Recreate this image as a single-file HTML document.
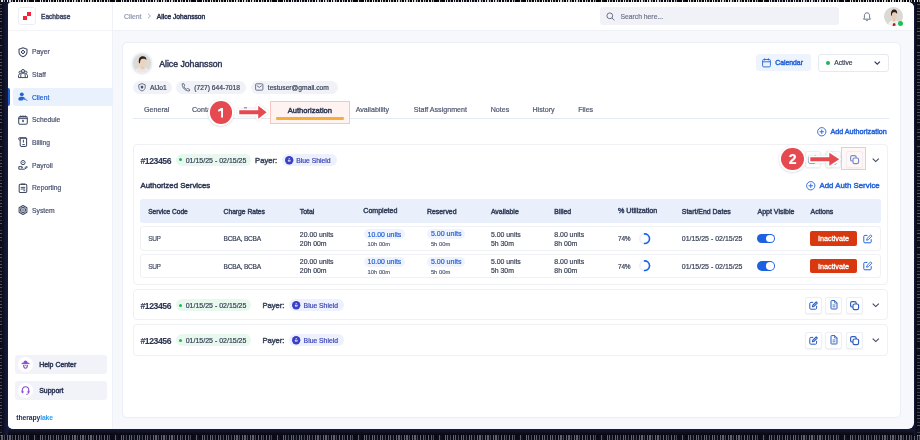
<!DOCTYPE html>
<html><head><meta charset="utf-8"><style>
html,body{margin:0;padding:0;}
body{width:920px;height:440px;overflow:hidden;position:relative;background:#0e1020;font-family:"Liberation Sans", sans-serif;}
.a{position:absolute;}
.t{white-space:nowrap;-webkit-font-smoothing:antialiased;}
svg{overflow:visible;}
</style></head><body>
<div class="a" style="left:0;top:0;width:920px;height:440px;will-change:transform">
<div class="a" style="left:0px;top:0px;width:920.00px;height:2.00px;background:repeating-linear-gradient(90deg,#0a0a10 0 1.3px,#d8d8dc 1.3px 2.6px,#15151c 2.6px 4.1px,#9a9aa2 4.1px 5px,#050508 5px 7.2px,#e8e8ea 7.2px 8.1px);"></div>
<div class="a" style="left:2px;top:2px;width:6.50px;height:434.00px;background:linear-gradient(90deg,#0b0d1c,#161b3e 80%,#243070);"></div>
<div class="a" style="left:0px;top:2px;width:2.00px;height:434.00px;background:repeating-linear-gradient(180deg,#0a0a10 0 2.3px,#c8c8cc 2.3px 3.2px,#15151c 3.2px 6.1px,#8a8a92 6.1px 7px,#050508 7px 9.2px,#d8d8da 9.2px 10.1px);opacity:0.35;"></div>
<div class="a" style="left:8px;top:429px;width:906.00px;height:6.00px;background:linear-gradient(180deg,#161a3c,#07080f);"></div>
<div class="a" style="left:0px;top:435px;width:920.00px;height:5.00px;background:repeating-linear-gradient(90deg,#0a0a10 0 1.3px,#d8d8dc 1.3px 2.6px,#15151c 2.6px 4.1px,#9a9aa2 4.1px 5px,#050508 5px 7.2px,#e8e8ea 7.2px 8.1px);opacity:0.4;"></div>
<div class="a" style="left:913.5px;top:2px;width:3.50px;height:434.00px;background:linear-gradient(90deg,#151a3c,#07080f);"></div>
<div class="a" style="left:917px;top:2px;width:3.00px;height:434.00px;background:repeating-linear-gradient(180deg,#0a0a10 0 2.3px,#c8c8cc 2.3px 3.2px,#15151c 3.2px 6.1px,#8a8a92 6.1px 7px,#050508 7px 9.2px,#d8d8da 9.2px 10.1px);opacity:0.35;"></div>
<div class="a" style="left:8px;top:2px;width:906.00px;height:427.00px;background:#f6f8fc;border-radius:4px 6px 6px 5px;"></div>
<div class="a" style="left:8px;top:2px;width:105.00px;height:427.00px;background:#fff;border-right:1px solid #eef1f7;border-radius:4px 0 0 5px;box-sizing:border-box;"></div>
<div class="a" style="left:8px;top:30px;width:104.00px;height:1.00px;background:#f2f4f8;"></div>
<div class="a" style="left:18px;top:7px;width:17.50px;height:17.50px;border:1px solid #eceef3;border-radius:3px;box-sizing:border-box;background:#fff;"></div>
<div class="a" style="left:22.8px;top:15.9px;width:4.20px;height:4.00px;background:#f2243b;"></div>
<div class="a" style="left:26.9px;top:11.9px;width:4.10px;height:4.10px;background:#f2243b;"></div>
<div class="a t" style="left:41px;top:13.14px;height:7.92px;line-height:7.92px;font-size:6.6px;color:#434c66;font-weight:400;-webkit-text-stroke:0.45px #434c66;">Eachbase</div>
<div class="a" style="left:13px;top:88px;width:99.50px;height:18.00px;background:#e9f1fd;border-radius:3px 0 0 3px;"></div>
<div class="a" style="left:8px;top:88px;width:2.00px;height:18.00px;background:#1f5fd6;border-radius:0 2px 2px 0;"></div>
<div class="a t" style="left:32px;top:48.35px;height:8.1px;line-height:8.1px;font-size:6.75px;color:#4a5470;font-weight:400;-webkit-text-stroke:0.2px #4a5470;">Payer</div>
<svg class="a" style="left:17.6px;top:46.699999999999996px;" width="10" height="10" viewBox="0 0 10 10"><path d="M5 0.7 L9 2.2 V5 C9 7.5 7.2 8.9 5 9.7 C2.8 8.9 1 7.5 1 5 V2.2 Z" fill="none" stroke="#3f4963" stroke-width="1.05" stroke-linejoin="round"/><path d="M5 3 L7 5 L5 7 L3 5 Z" fill="none" stroke="#3f4963" stroke-width="1"/><circle cx="5" cy="5" r="0.6" fill="#3f4963"/></svg>
<div class="a t" style="left:32px;top:71.05px;height:8.1px;line-height:8.1px;font-size:6.75px;color:#4a5470;font-weight:400;-webkit-text-stroke:0.2px #4a5470;">Staff</div>
<svg class="a" style="left:17.6px;top:69.4px;" width="10" height="10" viewBox="0 0 10 10"><circle cx="5" cy="2" r="1.5" fill="none" stroke="#3f4963" stroke-width="1"/><circle cx="2.2" cy="3.3" r="1.2" fill="none" stroke="#3f4963" stroke-width="0.95"/><circle cx="7.8" cy="3.3" r="1.2" fill="none" stroke="#3f4963" stroke-width="0.95"/><path d="M2.8 8.6 V6.2 C2.8 4.9 3.8 4.2 5 4.2 C6.2 4.2 7.2 4.9 7.2 6.2 V8.6 M0.5 8.6 V6.5 C0.5 5.5 1.2 5 2.2 5 M9.5 8.6 V6.5 C9.5 5.5 8.8 5 7.8 5 M0.5 8.6 H9.5" fill="none" stroke="#3f4963" stroke-width="1"/></svg>
<div class="a t" style="left:32px;top:93.55px;height:8.1px;line-height:8.1px;font-size:6.75px;color:#2563d6;font-weight:400;-webkit-text-stroke:0.2px #2563d6;">Client</div>
<svg class="a" style="left:17.6px;top:91.9px;" width="10" height="10" viewBox="0 0 10 10"><circle cx="3.8" cy="2.3" r="1.9" fill="#2563d6"/><path d="M0.4 7 C0.4 5.4 1.8 4.8 3.8 4.8 C5 4.8 6 5 6.6 5.6 L4.8 8.2 C4.6 8.4 4.3 8.5 4 8.5 H1.6 C0.9 8.5 0.4 8 0.4 7 Z" fill="#2563d6"/><path d="M5.4 7 L6.6 6.2 L9.2 8.8" fill="none" stroke="#2563d6" stroke-width="1"/><circle cx="6.6" cy="7.6" r="0.5" fill="#2563d6"/></svg>
<div class="a t" style="left:32px;top:116.35px;height:8.1px;line-height:8.1px;font-size:6.75px;color:#4a5470;font-weight:400;-webkit-text-stroke:0.2px #4a5470;">Schedule</div>
<svg class="a" style="left:17.6px;top:114.7px;" width="10" height="10" viewBox="0 0 10 10"><rect x="0.7" y="1.6" width="8.6" height="7.6" rx="1.5" fill="none" stroke="#3f4963" stroke-width="1.05"/><path d="M0.7 3.6 H9.3 M2.8 0.4 V2.6 M5 0.4 V2.6 M7.2 0.4 V2.6" stroke="#3f4963" stroke-width="0.95"/><path d="M5 4.6 L6.2 5.9 L5 7.4 L3.8 5.9 Z" fill="#3f4963"/></svg>
<div class="a t" style="left:32px;top:138.95px;height:8.1px;line-height:8.1px;font-size:6.75px;color:#4a5470;font-weight:400;-webkit-text-stroke:0.2px #4a5470;">Billing</div>
<svg class="a" style="left:17.6px;top:137.3px;" width="10" height="10" viewBox="0 0 10 10"><path d="M2.2 1.2 H8.6 V8 C8.6 8.8 8 9.4 7.2 9.4 H3.6 C2.8 9.4 2.2 8.8 2.2 8 Z" fill="none" stroke="#3f4963" stroke-width="1.05"/><path d="M0.6 1.4 C0.6 2.8 1.4 3.2 2.2 3.2 M0.6 1.4 C0.6 0.9 1 0.7 1.6 0.7 H8" fill="none" stroke="#3f4963" stroke-width="1"/><path d="M5.4 2.8 V5.6 M4.4 7.6 H6.8" fill="none" stroke="#3f4963" stroke-width="1"/></svg>
<div class="a t" style="left:32px;top:161.55px;height:8.1px;line-height:8.1px;font-size:6.75px;color:#4a5470;font-weight:400;-webkit-text-stroke:0.2px #4a5470;">Payroll</div>
<svg class="a" style="left:17.6px;top:159.9px;" width="10" height="10" viewBox="0 0 10 10"><circle cx="5" cy="2.6" r="2.1" fill="none" stroke="#3f4963" stroke-width="1"/><path d="M4.3 2.6 H5.7" stroke="#3f4963" stroke-width="0.8"/><path d="M0.8 9.2 V6.6 H3.8 C4.6 6.6 4.9 7.6 4.2 7.8 H3 M0.8 9.2 H6.4 L9.4 7.2 C9.2 6.6 8.6 6.4 8 6.8 L6.6 7.8" fill="none" stroke="#3f4963" stroke-width="1" stroke-linejoin="round"/></svg>
<div class="a t" style="left:32px;top:184.15px;height:8.1px;line-height:8.1px;font-size:6.75px;color:#4a5470;font-weight:400;-webkit-text-stroke:0.2px #4a5470;">Reporting</div>
<svg class="a" style="left:17.6px;top:182.5px;" width="10" height="10" viewBox="0 0 10 10"><rect x="1.2" y="1.3" width="7.6" height="8.2" rx="1.2" fill="none" stroke="#3f4963" stroke-width="1.05"/><path d="M3 0.6 H7 V2 H3 Z" fill="#3f4963"/><path d="M2.8 4.4 H7.2 M2.8 6 H7.2 M5.4 7.7 H7.2" stroke="#3f4963" stroke-width="0.95"/></svg>
<div class="a t" style="left:32px;top:206.85px;height:8.1px;line-height:8.1px;font-size:6.75px;color:#4a5470;font-weight:400;-webkit-text-stroke:0.2px #4a5470;">System</div>
<svg class="a" style="left:17.6px;top:205.20000000000002px;" width="10" height="10" viewBox="0 0 10 10"><path d="M5 0.5 L8.9 2.75 V7.25 L5 9.5 L1.1 7.25 V2.75 Z" fill="none" stroke="#3f4963" stroke-width="1.05" stroke-linejoin="round"/><circle cx="5" cy="5" r="2.6" fill="none" stroke="#3f4963" stroke-width="1"/><circle cx="5" cy="5" r="1.2" fill="none" stroke="#3f4963" stroke-width="0.8"/></svg>
<div class="a" style="left:15px;top:355px;width:92.00px;height:18.50px;background:#f1f3f8;border-radius:3px;"></div>
<div class="a" style="left:18.2px;top:357px;width:14.60px;height:14.60px;background:#fff;border-radius:50%;"></div>
<div class="a t" style="left:39.2px;top:360.63px;height:8.34px;line-height:8.34px;font-size:6.95px;color:#2d3654;font-weight:400;-webkit-text-stroke:0.45px #2d3654;">Help Center</div>
<svg class="a" style="left:21.2px;top:359.8px;" width="9" height="9" viewBox="0 0 9 9"><path d="M2.4 3.2 C2.4 1.4 3.4 0.6 4.5 0.6 C5.6 0.6 6.6 1.4 6.6 3.2 Z" fill="#8a4fd6"/><path d="M0.6 3.6 H8.4" stroke="#8a4fd6" stroke-width="1.1"/><path d="M1.8 2.2 L3 3.4 M7.2 2.2 L6 3.4" stroke="#8a4fd6" stroke-width="0.8"/><path d="M2.6 5.0 C2.6 7.2 3.4 8.2 4.5 8.2 C5.6 8.2 6.4 7.2 6.4 5.0" fill="none" stroke="#8a4fd6" stroke-width="1.1"/><path d="M3.6 5.4 H5.4" stroke="#8a4fd6" stroke-width="0.8"/></svg>
<div class="a" style="left:15px;top:381px;width:92.00px;height:18.50px;background:#f1f3f8;border-radius:3px;"></div>
<div class="a" style="left:18.2px;top:383px;width:14.60px;height:14.60px;background:#fff;border-radius:50%;"></div>
<div class="a t" style="left:39.2px;top:386.63px;height:8.34px;line-height:8.34px;font-size:6.95px;color:#2d3654;font-weight:400;-webkit-text-stroke:0.45px #2d3654;">Support</div>
<svg class="a" style="left:21px;top:385.6px;" width="9" height="9" viewBox="0 0 9 9"><path d="M1.2 5.2 V4.5 C1.2 2.3 2.6 0.8 4.5 0.8 C6.4 0.8 7.8 2.3 7.8 4.5 V5.2" fill="none" stroke="#8a4fd6" stroke-width="1.1"/><rect x="0.6" y="4.4" width="1.8" height="2.8" rx="0.8" fill="#8a4fd6"/><rect x="6.6" y="4.4" width="1.8" height="2.8" rx="0.8" fill="#8a4fd6"/><path d="M7.5 7 C7.3 8 6.4 8.4 5.2 8.4" fill="none" stroke="#8a4fd6" stroke-width="0.9"/></svg>
<div class="a t" style="left:16.3px;top:414px;height:8px;line-height:8px;font-size:6.8px;font-weight:700;letter-spacing:-0.1px;color:#1f2c55">therapy<span style="color:#2f9bef">lake</span></div>
<div class="a" style="left:113px;top:2px;width:801.00px;height:28.00px;background:#fff;border-radius:0 6px 0 0;"></div>
<div class="a" style="left:113px;top:30px;width:801.00px;height:1.00px;background:#eef1f6;"></div>
<div class="a t" style="left:124px;top:12.72px;height:8.16px;line-height:8.16px;font-size:6.8px;color:#8e96a8;font-weight:400;-webkit-text-stroke:0.2px #8e96a8;">Client</div>
<svg class="a" style="left:147px;top:13.3px;" width="4.5" height="6" viewBox="0 0 4.5 6"><path d="M1 0.7 L3.4 3 L1 5.3" fill="none" stroke="#8e96a8" stroke-width="0.8"/></svg>
<div class="a t" style="left:156.8px;top:12.81px;height:7.98px;line-height:7.98px;font-size:6.65px;color:#2d3654;font-weight:400;-webkit-text-stroke:0.45px #2d3654;">Alice Johansson</div>
<div class="a" style="left:600px;top:7px;width:238.50px;height:18.00px;background:#f0f2f7;border-radius:3px;"></div>
<svg class="a" style="left:605.5px;top:11.5px;" width="9" height="9" viewBox="0 0 9 9"><circle cx="3.8" cy="3.8" r="2.9" fill="none" stroke="#5b647a" stroke-width="0.9"/><path d="M6 6 L8.4 8.4" stroke="#5b647a" stroke-width="0.9"/></svg>
<div class="a t" style="left:620.4px;top:12.52px;height:8.16px;line-height:8.16px;font-size:6.8px;color:#6e7689;font-weight:400;-webkit-text-stroke:0.2px #6e7689;">Search here...</div>
<svg class="a" style="left:862.5px;top:11.5px;" width="8" height="9.5" viewBox="0 0 8 9.5"><path d="M4 0.8 C2.2 0.8 1.4 2.2 1.4 3.8 V5.8 L0.6 7.2 H7.4 L6.6 5.8 V3.8 C6.6 2.2 5.8 0.8 4 0.8 Z" fill="none" stroke="#4a5470" stroke-width="0.8"/><path d="M3 8.2 C3.3 8.8 4.7 8.8 5 8.2" fill="none" stroke="#4a5470" stroke-width="0.8"/></svg>
<div class="a" style="left:884.0px;top:6.5px;width:19.0px;height:19.0px;border-radius:50%;overflow:hidden;"><svg style="display:block" width="19.0" height="19.0" viewBox="0 0 20 20"><rect width="20" height="20" fill="#dcd8d3"/><path d="M4 20 C4.5 15.5 7 14 10.5 14 C14 14 16 15.5 16.5 20 Z" fill="#f4f0ea"/><path d="M9 20 L9.6 17 L11.8 17 L12.4 20 Z" fill="#a81c20"/><path d="M7.6 9 C7.4 5.6 8.6 4 10.6 4 C12.6 4 13.6 5.6 13.4 9 C13.2 11.6 12 13 10.6 13 C9.2 13 7.8 11.6 7.6 9 Z" fill="#e9cdbb"/><path d="M9.4 12.4 L11.8 12.4 L12 15.2 L9.2 15.2 Z" fill="#e2c3ae"/><path d="M7.4 8.8 C7 4.6 8.4 2.6 10.8 2.6 C13 2.6 14.2 4.2 13.8 7.4 C13 5.8 11.6 5.2 9.4 5.8 C8.6 6.4 8.2 7.6 8.2 9.6 Z" fill="#2b1f1b"/></svg></div>
<div class="a" style="left:897.9px;top:20.7px;width:5.00px;height:5.00px;background:#1fbf5a;border-radius:50%;"></div>
<div class="a" style="left:121.5px;top:42.0px;width:779.00px;height:375.70px;background:#fff;border:1px solid #e9eef7;border-radius:5px;box-sizing:border-box;"></div>
<div class="a" style="left:133.0px;top:54.2px;width:18.4px;height:18.4px;border-radius:50%;overflow:hidden;box-shadow:0 0 0 1.3px #e8eef9,0 0 2.5px 1.5px #edf2fb;"><svg style="display:block" width="18.4" height="18.4" viewBox="0 0 20 20"><rect width="20" height="20" fill="#dedad4"/><path d="M2 20 C3 16 6 14.5 10 14.5 C14 14.5 17 16 18 20 Z" fill="#efe6de"/><path d="M8.4 13 L12 13 L12.6 16.5 L8.2 16.5 Z" fill="#e6cdbb"/><path d="M6.8 9.4 C6.6 5.4 8.2 3.6 10.6 3.6 C13 3.6 14.4 5.6 14 9.4 C13.7 12.4 12.2 14.2 10.4 14.2 C8.6 14.2 7 12.4 6.8 9.4 Z" fill="#ead3c3"/><path d="M6.4 9.6 C5.8 4.6 7.6 2.4 10.6 2.4 C13.2 2.4 14.8 4 14.6 6.6 C13.4 5.2 11.6 4.8 9.4 5.4 C8.2 6 7.6 7.4 7.6 10.4 Z" fill="#2a201d"/><path d="M3.5 20 L4.5 17 M16.5 20 L15.5 17" stroke="#f6f2ee" stroke-width="1.5"/></svg></div>
<div class="a t" style="left:159.2px;top:59.18px;height:10.44px;line-height:10.44px;font-size:8.7px;color:#2d3654;font-weight:400;-webkit-text-stroke:0.45px #2d3654;">Alice Johansson</div>
<div class="a" style="left:755.6px;top:54px;width:55.20px;height:17.30px;background:#eef4fd;border-radius:3px;"></div>
<svg class="a" style="left:762.3px;top:57.8px;" width="9" height="9.5" viewBox="0 0 9 9.5"><rect x="0.6" y="1.5" width="7.8" height="7.4" rx="1.2" fill="none" stroke="#2563d6" stroke-width="0.9"/><path d="M0.6 3.8 H8.4 M2.6 0.4 V2.4 M6.4 0.4 V2.4" stroke="#2563d6" stroke-width="0.9"/></svg>
<div class="a t" style="left:775.2px;top:59.09px;height:8.22px;line-height:8.22px;font-size:6.85px;color:#2563d6;font-weight:400;-webkit-text-stroke:0.45px #2563d6;">Calendar</div>
<div class="a" style="left:818.3px;top:54px;width:70.40px;height:17.70px;background:#fff;border:1px solid #e6e9f0;border-radius:3px;box-sizing:border-box;"></div>
<div class="a" style="left:825.8px;top:60.8px;width:4.50px;height:4.50px;background:#1fb558;border-radius:50%;"></div>
<div class="a t" style="left:834.3px;top:59.48px;height:8.04px;line-height:8.04px;font-size:6.7px;color:#3a4358;font-weight:400;-webkit-text-stroke:0.2px #3a4358;">Active</div>
<svg class="a" style="left:873.5px;top:60.5px;" width="6.5" height="4" viewBox="0 0 6.5 4"><path d="M0.6 0.6 L3.25 3.2 L5.9 0.6" fill="none" stroke="#2d3654" stroke-width="1.15"/></svg>
<div class="a" style="left:133.4px;top:81px;width:38.70px;height:12.80px;background:#f0f2f7;border-radius:6.5px;"></div>
<div class="a t" style="left:150px;top:83.98px;height:8.04px;line-height:8.04px;font-size:6.7px;color:#3a4358;font-weight:400;-webkit-text-stroke:0.2px #3a4358;">AlJo1</div>
<svg class="a" style="left:138px;top:83.3px;" width="8" height="8.5" viewBox="0 0 8 8.5"><path d="M4 0.6 L7.2 1.8 V4.2 C7.2 6.2 5.8 7.4 4 8 C2.2 7.4 0.8 6.2 0.8 4.2 V1.8 Z" fill="none" stroke="#4a5470" stroke-width="0.8"/><path d="M4 2.8 C5 2.8 5.4 3.4 5.4 4 C5.4 4.8 4 6 4 6 C4 6 2.6 4.8 2.6 4 C2.6 3.4 3 2.8 4 2.8 Z" fill="#4a5470"/></svg>
<div class="a" style="left:176.4px;top:81px;width:69.40px;height:12.80px;background:#f0f2f7;border-radius:6.5px;"></div>
<div class="a t" style="left:194.3px;top:83.98px;height:8.04px;line-height:8.04px;font-size:6.7px;color:#3a4358;font-weight:400;-webkit-text-stroke:0.2px #3a4358;">(727) 644-7018</div>
<svg class="a" style="left:181px;top:83.2px;" width="9" height="8.5" viewBox="0 0 9 8.5"><path d="M1.2 0.8 L2.8 0.6 L3.8 2.8 L2.8 3.6 C3.4 5 4.2 5.8 5.6 6.4 L6.4 5.4 L8.6 6.4 L8.4 8 C4.4 8.2 1 4.8 1.2 0.8 Z" fill="none" stroke="#4a5470" stroke-width="0.8" stroke-linejoin="round"/></svg>
<div class="a" style="left:250.5px;top:81px;width:87.30px;height:12.80px;background:#f0f2f7;border-radius:6.5px;"></div>
<div class="a t" style="left:267.8px;top:83.98px;height:8.04px;line-height:8.04px;font-size:6.7px;color:#3a4358;font-weight:400;-webkit-text-stroke:0.2px #3a4358;">testuser@gmail.com</div>
<svg class="a" style="left:255.3px;top:83.4px;" width="8.5" height="8" viewBox="0 0 8.5 8"><rect x="0.6" y="0.8" width="7.3" height="6.4" rx="1" fill="none" stroke="#4a5470" stroke-width="0.8"/><path d="M1.8 2.6 L4.25 4.4 L6.7 2.6" fill="none" stroke="#4a5470" stroke-width="0.8"/></svg>
<div class="a" style="left:132.6px;top:118.1px;width:756.00px;height:1.00px;background:#e4eaf5;"></div>
<div class="a" style="left:270.2px;top:100.5px;width:80.10px;height:23.20px;background:#fff3f2;border:1px solid #f7c6c1;box-sizing:border-box;"></div>
<div class="a" style="left:276.3px;top:117.4px;width:68.20px;height:2.20px;background:#f7ad3a;border-radius:1.2px;"></div>
<div class="a t" style="left:144.1px;top:106.14px;height:8.52px;line-height:8.52px;font-size:7.1px;color:#4f586e;font-weight:400;-webkit-text-stroke:0.2px #4f586e;">General</div>
<div class="a t" style="left:192px;top:106.14px;height:8.52px;line-height:8.52px;font-size:7.1px;color:#4f586e;font-weight:400;-webkit-text-stroke:0.2px #4f586e;">Contacts</div>
<div class="a t" style="left:287.7px;top:105.84px;height:9.12px;line-height:9.12px;font-size:7.6px;color:#2d3654;font-weight:400;-webkit-text-stroke:0.45px #2d3654;">Authorization</div>
<div class="a t" style="left:355.7px;top:106.14px;height:8.52px;line-height:8.52px;font-size:7.1px;color:#4f586e;font-weight:400;-webkit-text-stroke:0.2px #4f586e;">Availability</div>
<div class="a t" style="left:413.8px;top:106.14px;height:8.52px;line-height:8.52px;font-size:7.1px;color:#4f586e;font-weight:400;-webkit-text-stroke:0.2px #4f586e;">Staff Assignment</div>
<div class="a t" style="left:490.7px;top:106.14px;height:8.52px;line-height:8.52px;font-size:7.1px;color:#4f586e;font-weight:400;-webkit-text-stroke:0.2px #4f586e;">Notes</div>
<div class="a t" style="left:532.5px;top:106.14px;height:8.52px;line-height:8.52px;font-size:7.1px;color:#4f586e;font-weight:400;-webkit-text-stroke:0.2px #4f586e;">History</div>
<div class="a t" style="left:578.2px;top:106.14px;height:8.52px;line-height:8.52px;font-size:7.1px;color:#4f586e;font-weight:400;-webkit-text-stroke:0.2px #4f586e;">Files</div>
<svg class="a" style="left:817.2px;top:127.05000000000001px;" width="9.5" height="9.5" viewBox="0 0 9.5 9.5"><circle cx="4.75" cy="4.75" r="4.15" fill="none" stroke="#2563d6" stroke-width="0.9"/><path d="M4.75 2.55 V6.95 M2.55 4.75 H6.95" stroke="#2563d6" stroke-width="0.9"/></svg>
<div class="a t" style="left:830.4px;top:128.08px;height:8.64px;line-height:8.64px;font-size:7.2px;color:#2563d6;font-weight:400;-webkit-text-stroke:0.45px #2563d6;">Add Authorization</div>
<div class="a" style="left:132.6px;top:144px;width:755.40px;height:140.50px;background:#fff;border:1px solid #eff1f5;border-radius:4px;box-sizing:border-box;"></div>
<div class="a t" style="left:140.5px;top:155.54px;height:10.32px;line-height:10.32px;font-size:8.6px;color:#2d3654;font-weight:700;letter-spacing:-0.42px;-webkit-text-stroke:0.1px #2d3654;">#123456</div>
<div class="a" style="left:175.5px;top:153.60000000000002px;width:75.10px;height:12.40px;background:#e8f8ee;border-radius:6px;"></div>
<div class="a" style="left:179.3px;top:158.3px;width:3.00px;height:3.00px;background:#1fb558;border-radius:50%;"></div>
<div class="a t" style="left:185.7px;top:156.70px;height:8.4px;line-height:8.4px;font-size:7.0px;color:#3a4358;font-weight:400;-webkit-text-stroke:0.2px #3a4358;">01/15/25 - 02/15/25</div>
<div class="a t" style="left:255.1px;top:155.84px;height:9.12px;line-height:9.12px;font-size:7.6px;color:#3a4358;font-weight:400;-webkit-text-stroke:0.45px #3a4358;">Payer:</div>
<div class="a" style="left:281.9px;top:153.5px;width:54.80px;height:12.70px;background:#edf1fd;border-radius:6.3px;"></div>
<svg class="a" style="left:284.5px;top:155.60000000000002px;" width="8.4" height="8.4" viewBox="0 0 8.4 8.4"><circle cx="4.2" cy="4.2" r="4.2" fill="#3a3fc6"/><path d="M2.9 5.4 V3.9 L3.6 3.2 V4.5 H4.8 V3.2 L5.5 3.9 V5.4 Z" fill="#fff"/><circle cx="4.2" cy="2.6" r="0.6" fill="#fff"/></svg>
<div class="a t" style="left:296.2px;top:156.82px;height:8.16px;line-height:8.16px;font-size:6.8px;color:#3c44b4;font-weight:400;-webkit-text-stroke:0.2px #3c44b4;">Blue Shield</div>
<div class="a" style="left:804.6px;top:151.3px;width:16.00px;height:17.00px;background:#fff;border:1px solid #eceff4;border-radius:2.5px;box-sizing:border-box;box-shadow:0 0.5px 1px rgba(0,0,0,0.05);"></div>
<svg class="a" style="left:808.1px;top:155.3px;" width="9" height="9" viewBox="0 0 9 9"><path d="M4.2 1.4 H1.8 C1.2 1.4 0.8 1.8 0.8 2.4 V7.2 C0.8 7.8 1.2 8.2 1.8 8.2 H6.6 C7.2 8.2 7.6 7.8 7.6 7.2 V4.8" fill="none" stroke="#2c5cbc" stroke-width="1"/><path d="M3.4 5.8 L3.8 4.2 L7.2 0.8 L8.4 2 L5 5.4 Z" fill="#2c5cbc" fill-opacity="0.35" stroke="#2c5cbc" stroke-width="1.05" stroke-linejoin="round"/></svg>
<div class="a" style="left:824.6px;top:151.3px;width:16.00px;height:17.00px;background:#fff;border:1px solid #eceff4;border-radius:2.5px;box-sizing:border-box;box-shadow:0 0.5px 1px rgba(0,0,0,0.05);"></div>
<svg class="a" style="left:828.6px;top:155.0px;" width="8" height="9.6" viewBox="0 0 8 9.6"><path d="M1 1.2 C1 0.8 1.3 0.6 1.6 0.6 H4.8 L7 2.8 V8.4 C7 8.8 6.7 9 6.4 9 H1.6 C1.3 9 1 8.8 1 8.4 Z" fill="none" stroke="#2c5cbc" stroke-width="1"/><path d="M4.6 0.6 V3 H7 M2.6 5 H5.4 M2.6 6.8 H5.4" fill="none" stroke="#2c5cbc" stroke-width="0.8"/></svg>
<div class="a" style="left:845.6px;top:151.3px;width:17.00px;height:17.00px;background:#fff;border:1px solid #eceff4;border-radius:2.5px;box-sizing:border-box;box-shadow:0 0.5px 1px rgba(0,0,0,0.05);"></div>
<svg class="a" style="left:849.5px;top:155.4px;" width="9.2" height="9.2" viewBox="0 0 9.2 9.2"><rect x="0.6" y="0.6" width="5.6" height="5.4" rx="1.6" fill="none" stroke="#2c5cbc" stroke-width="1.15"/><rect x="3.0" y="3.0" width="5.6" height="5.6" rx="1.6" fill="#fff" stroke="#2c5cbc" stroke-width="1.15"/></svg>
<svg class="a" style="left:872px;top:157.60000000000002px;" width="7.5" height="4.5" viewBox="0 0 7.5 4.5"><path d="M0.7 0.7 L3.75 3.6 L6.8 0.7" fill="none" stroke="#3d4559" stroke-width="1.1"/></svg>
<div class="a" style="left:841.4px;top:147.3px;width:24.40px;height:23.10px;background:rgba(255,230,228,0.35);border:1px solid #f7c6c1;box-sizing:border-box;"></div>
<div class="a t" style="left:140.5px;top:181.39px;height:9.42px;line-height:9.42px;font-size:7.85px;color:#2d3654;font-weight:400;-webkit-text-stroke:0.45px #2d3654;">Authorized Services</div>
<svg class="a" style="left:806px;top:180.75px;" width="9.5" height="9.5" viewBox="0 0 9.5 9.5"><circle cx="4.75" cy="4.75" r="4.15" fill="none" stroke="#2563d6" stroke-width="0.9"/><path d="M4.75 2.55 V6.95 M2.55 4.75 H6.95" stroke="#2563d6" stroke-width="0.9"/></svg>
<div class="a t" style="left:819.5px;top:181.39px;height:9.42px;line-height:9.42px;font-size:7.85px;color:#2563d6;font-weight:400;-webkit-text-stroke:0.45px #2563d6;">Add Auth Service</div>
<div class="a" style="left:140.2px;top:199px;width:741.10px;height:23.60px;background:#e9f0fc;border-radius:3px;"></div>
<div class="a t" style="left:148.2px;top:207.74px;height:7.92px;line-height:7.92px;font-size:6.6px;color:#34405c;font-weight:400;-webkit-text-stroke:0.45px #34405c;">Service Code</div>
<div class="a t" style="left:223.6px;top:207.68px;height:8.04px;line-height:8.04px;font-size:6.7px;color:#34405c;font-weight:400;-webkit-text-stroke:0.45px #34405c;">Charge Rates</div>
<div class="a t" style="left:299.8px;top:207.56px;height:8.28px;line-height:8.28px;font-size:6.9px;color:#34405c;font-weight:400;-webkit-text-stroke:0.45px #34405c;">Total</div>
<div class="a t" style="left:363.3px;top:207.47px;height:8.46px;line-height:8.46px;font-size:7.05px;color:#34405c;font-weight:400;-webkit-text-stroke:0.45px #34405c;">Completed</div>
<div class="a t" style="left:427px;top:207.56px;height:8.28px;line-height:8.28px;font-size:6.9px;color:#34405c;font-weight:400;-webkit-text-stroke:0.45px #34405c;">Reserved</div>
<div class="a t" style="left:490.9px;top:207.56px;height:8.28px;line-height:8.28px;font-size:6.9px;color:#34405c;font-weight:400;-webkit-text-stroke:0.45px #34405c;">Available</div>
<div class="a t" style="left:554.3px;top:207.56px;height:8.28px;line-height:8.28px;font-size:6.9px;color:#34405c;font-weight:400;-webkit-text-stroke:0.45px #34405c;">Billed</div>
<div class="a t" style="left:618px;top:207.41px;height:8.58px;line-height:8.58px;font-size:7.15px;color:#34405c;font-weight:400;-webkit-text-stroke:0.45px #34405c;">% Utilization</div>
<div class="a t" style="left:681.75px;top:207.53px;height:8.34px;line-height:8.34px;font-size:6.95px;color:#34405c;font-weight:400;-webkit-text-stroke:0.45px #34405c;">Start/End Dates</div>
<div class="a t" style="left:757.5px;top:207.50px;height:8.4px;line-height:8.4px;font-size:7.0px;color:#34405c;font-weight:400;-webkit-text-stroke:0.45px #34405c;">Appt Visible</div>
<div class="a t" style="left:810.5px;top:207.53px;height:8.34px;line-height:8.34px;font-size:6.95px;color:#34405c;font-weight:400;-webkit-text-stroke:0.45px #34405c;">Actions</div>
<div class="a" style="left:140.2px;top:226.4px;width:741.10px;height:24.30px;background:#fff;border:1px solid #eff1f5;border-radius:3px;box-sizing:border-box;"></div>
<div class="a t" style="left:148.2px;top:235.14px;height:7.92px;line-height:7.92px;font-size:6.6px;color:#4a536a;font-weight:400;-webkit-text-stroke:0.2px #4a536a;letter-spacing:-0.4px;">SUP</div>
<div class="a t" style="left:223.6px;top:235.14px;height:7.92px;line-height:7.92px;font-size:6.6px;color:#3a4358;font-weight:400;-webkit-text-stroke:0.2px #3a4358;letter-spacing:-0.22px;">BCBA, BCBA</div>
<div class="a t" style="left:299.8px;top:230.66px;height:8.28px;line-height:8.28px;font-size:6.9px;color:#3a4358;font-weight:400;-webkit-text-stroke:0.2px #3a4358;">20.00 units</div>
<div class="a t" style="left:299.8px;top:239.76px;height:8.28px;line-height:8.28px;font-size:6.9px;color:#3a4358;font-weight:400;-webkit-text-stroke:0.2px #3a4358;">20h 00m</div>
<div class="a" style="left:364px;top:229.3px;width:41.20px;height:9.80px;background:#eef3fd;border-radius:5px;"></div>
<div class="a t" style="left:367.6px;top:230.56px;height:8.28px;line-height:8.28px;font-size:6.9px;color:#2563d6;font-weight:400;-webkit-text-stroke:0.2px #2563d6;">10.00 units</div>
<div class="a t" style="left:367.6px;top:241.02px;height:6.96px;line-height:6.96px;font-size:5.8px;color:#5b647a;font-weight:400;-webkit-text-stroke:0.2px #5b647a;">10h 00m</div>
<div class="a" style="left:427.4px;top:229.3px;width:37.60px;height:9.80px;background:#eef3fd;border-radius:5px;"></div>
<div class="a t" style="left:430.9px;top:230.47px;height:8.46px;line-height:8.46px;font-size:7.05px;color:#2563d6;font-weight:400;-webkit-text-stroke:0.2px #2563d6;">5.00 units</div>
<div class="a t" style="left:430.9px;top:241.02px;height:6.96px;line-height:6.96px;font-size:5.8px;color:#5b647a;font-weight:400;-webkit-text-stroke:0.2px #5b647a;">5h 00m</div>
<div class="a t" style="left:490.9px;top:230.66px;height:8.28px;line-height:8.28px;font-size:6.9px;color:#3a4358;font-weight:400;-webkit-text-stroke:0.2px #3a4358;">5.00 units</div>
<div class="a t" style="left:490.9px;top:239.76px;height:8.28px;line-height:8.28px;font-size:6.9px;color:#3a4358;font-weight:400;-webkit-text-stroke:0.2px #3a4358;">5h 30m</div>
<div class="a t" style="left:554.3px;top:230.66px;height:8.28px;line-height:8.28px;font-size:6.9px;color:#3a4358;font-weight:400;-webkit-text-stroke:0.2px #3a4358;">8.00 units</div>
<div class="a t" style="left:554.3px;top:239.76px;height:8.28px;line-height:8.28px;font-size:6.9px;color:#3a4358;font-weight:400;-webkit-text-stroke:0.2px #3a4358;">8h 00m</div>
<div class="a t" style="left:618px;top:235.20px;height:7.8px;line-height:7.8px;font-size:6.5px;color:#3a4358;font-weight:400;-webkit-text-stroke:0.2px #3a4358;letter-spacing:-0.2px;">74%</div>
<svg class="a" style="left:639.2px;top:232.8px;" width="11.4" height="11.4" viewBox="0 0 11.4 11.4"><circle cx="5.7" cy="5.7" r="4.85" fill="none" stroke="#ebf0fa" stroke-width="1.6"/><path d="M4.9 0.92 A4.85 4.85 0 1 1 4.9 10.48" fill="none" stroke="#1a66e8" stroke-width="1.6"/></svg>
<div class="a t" style="left:681.75px;top:234.90px;height:8.4px;line-height:8.4px;font-size:7.0px;color:#3a4358;font-weight:400;-webkit-text-stroke:0.2px #3a4358;">01/15/25 - 02/15/25</div>
<div class="a" style="left:757px;top:233.75px;width:18.00px;height:9.50px;background:#1c62e0;border-radius:5px;"></div>
<div class="a" style="left:766.4px;top:234.8px;width:7.50px;height:7.50px;background:#fff;border-radius:50%;"></div>
<div class="a" style="left:810px;top:231.25px;width:47.00px;height:14.50px;background:#d9380f;border-radius:2px;"></div>
<div class="a t" style="left:810px;top:234.92px;height:8.76px;line-height:8.76px;font-size:7.3px;color:#fff;font-weight:400;-webkit-text-stroke:0.45px #fff;width:47px;text-align:center;-webkit-text-stroke:0.3px #fff;">Inactivate</div>
<svg class="a" style="left:862.5px;top:233.7px;" width="9.6" height="9.6" viewBox="0 0 9.6 9.6"><path d="M4.4 1.4 H1.8 C1.2 1.4 0.8 1.8 0.8 2.4 V7.8 C0.8 8.4 1.2 8.8 1.8 8.8 H7.2 C7.8 8.8 8.2 8.4 8.2 7.8 V5.2" fill="none" stroke="#2563d6" stroke-width="1"/><path d="M3.6 6.2 L4 4.5 L7.6 0.9 L8.9 2.2 L5.3 5.8 Z" fill="none" stroke="#2563d6" stroke-width="0.9" stroke-linejoin="round"/></svg>
<div class="a" style="left:140.2px;top:254.0px;width:741.10px;height:24.30px;background:#fff;border:1px solid #eff1f5;border-radius:3px;box-sizing:border-box;"></div>
<div class="a t" style="left:148.2px;top:262.74px;height:7.92px;line-height:7.92px;font-size:6.6px;color:#4a536a;font-weight:400;-webkit-text-stroke:0.2px #4a536a;letter-spacing:-0.4px;">SUP</div>
<div class="a t" style="left:223.6px;top:262.74px;height:7.92px;line-height:7.92px;font-size:6.6px;color:#3a4358;font-weight:400;-webkit-text-stroke:0.2px #3a4358;letter-spacing:-0.22px;">BCBA, BCBA</div>
<div class="a t" style="left:299.8px;top:258.26px;height:8.28px;line-height:8.28px;font-size:6.9px;color:#3a4358;font-weight:400;-webkit-text-stroke:0.2px #3a4358;">20.00 units</div>
<div class="a t" style="left:299.8px;top:267.36px;height:8.28px;line-height:8.28px;font-size:6.9px;color:#3a4358;font-weight:400;-webkit-text-stroke:0.2px #3a4358;">20h 00m</div>
<div class="a" style="left:364px;top:256.90000000000003px;width:41.20px;height:9.80px;background:#eef3fd;border-radius:5px;"></div>
<div class="a t" style="left:367.6px;top:258.16px;height:8.28px;line-height:8.28px;font-size:6.9px;color:#2563d6;font-weight:400;-webkit-text-stroke:0.2px #2563d6;">10.00 units</div>
<div class="a t" style="left:367.6px;top:268.62px;height:6.96px;line-height:6.96px;font-size:5.8px;color:#5b647a;font-weight:400;-webkit-text-stroke:0.2px #5b647a;">10h 00m</div>
<div class="a" style="left:427.4px;top:256.90000000000003px;width:37.60px;height:9.80px;background:#eef3fd;border-radius:5px;"></div>
<div class="a t" style="left:430.9px;top:258.07px;height:8.46px;line-height:8.46px;font-size:7.05px;color:#2563d6;font-weight:400;-webkit-text-stroke:0.2px #2563d6;">5.00 units</div>
<div class="a t" style="left:430.9px;top:268.62px;height:6.96px;line-height:6.96px;font-size:5.8px;color:#5b647a;font-weight:400;-webkit-text-stroke:0.2px #5b647a;">5h 00m</div>
<div class="a t" style="left:490.9px;top:258.26px;height:8.28px;line-height:8.28px;font-size:6.9px;color:#3a4358;font-weight:400;-webkit-text-stroke:0.2px #3a4358;">5.00 units</div>
<div class="a t" style="left:490.9px;top:267.36px;height:8.28px;line-height:8.28px;font-size:6.9px;color:#3a4358;font-weight:400;-webkit-text-stroke:0.2px #3a4358;">5h 30m</div>
<div class="a t" style="left:554.3px;top:258.26px;height:8.28px;line-height:8.28px;font-size:6.9px;color:#3a4358;font-weight:400;-webkit-text-stroke:0.2px #3a4358;">8.00 units</div>
<div class="a t" style="left:554.3px;top:267.36px;height:8.28px;line-height:8.28px;font-size:6.9px;color:#3a4358;font-weight:400;-webkit-text-stroke:0.2px #3a4358;">8h 00m</div>
<div class="a t" style="left:618px;top:262.80px;height:7.8px;line-height:7.8px;font-size:6.5px;color:#3a4358;font-weight:400;-webkit-text-stroke:0.2px #3a4358;letter-spacing:-0.2px;">74%</div>
<svg class="a" style="left:639.2px;top:260.40000000000003px;" width="11.4" height="11.4" viewBox="0 0 11.4 11.4"><circle cx="5.7" cy="5.7" r="4.85" fill="none" stroke="#ebf0fa" stroke-width="1.6"/><path d="M4.9 0.92 A4.85 4.85 0 1 1 4.9 10.48" fill="none" stroke="#1a66e8" stroke-width="1.6"/></svg>
<div class="a t" style="left:681.75px;top:262.50px;height:8.4px;line-height:8.4px;font-size:7.0px;color:#3a4358;font-weight:400;-webkit-text-stroke:0.2px #3a4358;">01/15/25 - 02/15/25</div>
<div class="a" style="left:757px;top:261.35px;width:18.00px;height:9.50px;background:#1c62e0;border-radius:5px;"></div>
<div class="a" style="left:766.4px;top:262.40000000000003px;width:7.50px;height:7.50px;background:#fff;border-radius:50%;"></div>
<div class="a" style="left:810px;top:258.85px;width:47.00px;height:14.50px;background:#d9380f;border-radius:2px;"></div>
<div class="a t" style="left:810px;top:262.52px;height:8.76px;line-height:8.76px;font-size:7.3px;color:#fff;font-weight:400;-webkit-text-stroke:0.45px #fff;width:47px;text-align:center;-webkit-text-stroke:0.3px #fff;">Inactivate</div>
<svg class="a" style="left:862.5px;top:261.3px;" width="9.6" height="9.6" viewBox="0 0 9.6 9.6"><path d="M4.4 1.4 H1.8 C1.2 1.4 0.8 1.8 0.8 2.4 V7.8 C0.8 8.4 1.2 8.8 1.8 8.8 H7.2 C7.8 8.8 8.2 8.4 8.2 7.8 V5.2" fill="none" stroke="#2563d6" stroke-width="1"/><path d="M3.6 6.2 L4 4.5 L7.6 0.9 L8.9 2.2 L5.3 5.8 Z" fill="none" stroke="#2563d6" stroke-width="0.9" stroke-linejoin="round"/></svg>
<div class="a" style="left:132.6px;top:289.2px;width:755.40px;height:30.70px;background:#fff;border:1px solid #eff1f5;border-radius:4px;box-sizing:border-box;"></div>
<div class="a t" style="left:140.5px;top:300.74px;height:10.32px;line-height:10.32px;font-size:8.6px;color:#2d3654;font-weight:700;letter-spacing:-0.42px;-webkit-text-stroke:0.1px #2d3654;">#123456</div>
<div class="a" style="left:175.5px;top:298.8px;width:75.10px;height:12.40px;background:#e8f8ee;border-radius:6px;"></div>
<div class="a" style="left:179.3px;top:303.5px;width:3.00px;height:3.00px;background:#1fb558;border-radius:50%;"></div>
<div class="a t" style="left:185.7px;top:301.90px;height:8.4px;line-height:8.4px;font-size:7.0px;color:#3a4358;font-weight:400;-webkit-text-stroke:0.2px #3a4358;">01/15/25 - 02/15/25</div>
<div class="a t" style="left:262.5px;top:301.04px;height:9.12px;line-height:9.12px;font-size:7.6px;color:#3a4358;font-weight:400;-webkit-text-stroke:0.45px #3a4358;">Payer:</div>
<div class="a" style="left:289.3px;top:298.7px;width:54.80px;height:12.70px;background:#edf1fd;border-radius:6.3px;"></div>
<svg class="a" style="left:291.90000000000003px;top:300.8px;" width="8.4" height="8.4" viewBox="0 0 8.4 8.4"><circle cx="4.2" cy="4.2" r="4.2" fill="#3a3fc6"/><path d="M2.9 5.4 V3.9 L3.6 3.2 V4.5 H4.8 V3.2 L5.5 3.9 V5.4 Z" fill="#fff"/><circle cx="4.2" cy="2.6" r="0.6" fill="#fff"/></svg>
<div class="a t" style="left:303.6px;top:302.02px;height:8.16px;line-height:8.16px;font-size:6.8px;color:#3c44b4;font-weight:400;-webkit-text-stroke:0.2px #3c44b4;">Blue Shield</div>
<div class="a" style="left:804.6px;top:296.5px;width:17.00px;height:17.00px;background:#fff;border:1px solid #eceff4;border-radius:2.5px;box-sizing:border-box;box-shadow:0 0.5px 1px rgba(0,0,0,0.05);"></div>
<svg class="a" style="left:808.6px;top:300.5px;" width="9" height="9" viewBox="0 0 9 9"><path d="M4.2 1.4 H1.8 C1.2 1.4 0.8 1.8 0.8 2.4 V7.2 C0.8 7.8 1.2 8.2 1.8 8.2 H6.6 C7.2 8.2 7.6 7.8 7.6 7.2 V4.8" fill="none" stroke="#2c5cbc" stroke-width="1"/><path d="M3.4 5.8 L3.8 4.2 L7.2 0.8 L8.4 2 L5 5.4 Z" fill="#2c5cbc" fill-opacity="0.35" stroke="#2c5cbc" stroke-width="1.05" stroke-linejoin="round"/></svg>
<div class="a" style="left:825.3px;top:296.5px;width:16.70px;height:17.00px;background:#fff;border:1px solid #eceff4;border-radius:2.5px;box-sizing:border-box;box-shadow:0 0.5px 1px rgba(0,0,0,0.05);"></div>
<svg class="a" style="left:829.65px;top:300.2px;" width="8" height="9.6" viewBox="0 0 8 9.6"><path d="M1 1.2 C1 0.8 1.3 0.6 1.6 0.6 H4.8 L7 2.8 V8.4 C7 8.8 6.7 9 6.4 9 H1.6 C1.3 9 1 8.8 1 8.4 Z" fill="none" stroke="#2c5cbc" stroke-width="1"/><path d="M4.6 0.6 V3 H7 M2.6 5 H5.4 M2.6 6.8 H5.4" fill="none" stroke="#2c5cbc" stroke-width="0.8"/></svg>
<div class="a" style="left:846.3px;top:296.5px;width:16.70px;height:17.00px;background:#fff;border:1px solid #eceff4;border-radius:2.5px;box-sizing:border-box;box-shadow:0 0.5px 1px rgba(0,0,0,0.05);"></div>
<svg class="a" style="left:850.05px;top:300.6px;" width="9.2" height="9.2" viewBox="0 0 9.2 9.2"><rect x="0.6" y="0.6" width="5.6" height="5.4" rx="1.6" fill="none" stroke="#2c5cbc" stroke-width="1.15"/><rect x="3.0" y="3.0" width="5.6" height="5.6" rx="1.6" fill="#fff" stroke="#2c5cbc" stroke-width="1.15"/></svg>
<svg class="a" style="left:872px;top:302.8px;" width="7.5" height="4.5" viewBox="0 0 7.5 4.5"><path d="M0.7 0.7 L3.75 3.6 L6.8 0.7" fill="none" stroke="#3d4559" stroke-width="1.1"/></svg>
<div class="a" style="left:132.6px;top:324.2px;width:755.40px;height:31.40px;background:#fff;border:1px solid #eff1f5;border-radius:4px;box-sizing:border-box;"></div>
<div class="a t" style="left:140.5px;top:335.74px;height:10.32px;line-height:10.32px;font-size:8.6px;color:#2d3654;font-weight:700;letter-spacing:-0.42px;-webkit-text-stroke:0.1px #2d3654;">#123456</div>
<div class="a" style="left:175.5px;top:333.8px;width:75.10px;height:12.40px;background:#e8f8ee;border-radius:6px;"></div>
<div class="a" style="left:179.3px;top:338.5px;width:3.00px;height:3.00px;background:#1fb558;border-radius:50%;"></div>
<div class="a t" style="left:185.7px;top:336.90px;height:8.4px;line-height:8.4px;font-size:7.0px;color:#3a4358;font-weight:400;-webkit-text-stroke:0.2px #3a4358;">01/15/25 - 02/15/25</div>
<div class="a t" style="left:262.5px;top:336.04px;height:9.12px;line-height:9.12px;font-size:7.6px;color:#3a4358;font-weight:400;-webkit-text-stroke:0.45px #3a4358;">Payer:</div>
<div class="a" style="left:289.3px;top:333.7px;width:54.80px;height:12.70px;background:#edf1fd;border-radius:6.3px;"></div>
<svg class="a" style="left:291.90000000000003px;top:335.8px;" width="8.4" height="8.4" viewBox="0 0 8.4 8.4"><circle cx="4.2" cy="4.2" r="4.2" fill="#3a3fc6"/><path d="M2.9 5.4 V3.9 L3.6 3.2 V4.5 H4.8 V3.2 L5.5 3.9 V5.4 Z" fill="#fff"/><circle cx="4.2" cy="2.6" r="0.6" fill="#fff"/></svg>
<div class="a t" style="left:303.6px;top:337.02px;height:8.16px;line-height:8.16px;font-size:6.8px;color:#3c44b4;font-weight:400;-webkit-text-stroke:0.2px #3c44b4;">Blue Shield</div>
<div class="a" style="left:804.6px;top:331.5px;width:17.00px;height:17.00px;background:#fff;border:1px solid #eceff4;border-radius:2.5px;box-sizing:border-box;box-shadow:0 0.5px 1px rgba(0,0,0,0.05);"></div>
<svg class="a" style="left:808.6px;top:335.5px;" width="9" height="9" viewBox="0 0 9 9"><path d="M4.2 1.4 H1.8 C1.2 1.4 0.8 1.8 0.8 2.4 V7.2 C0.8 7.8 1.2 8.2 1.8 8.2 H6.6 C7.2 8.2 7.6 7.8 7.6 7.2 V4.8" fill="none" stroke="#2c5cbc" stroke-width="1"/><path d="M3.4 5.8 L3.8 4.2 L7.2 0.8 L8.4 2 L5 5.4 Z" fill="#2c5cbc" fill-opacity="0.35" stroke="#2c5cbc" stroke-width="1.05" stroke-linejoin="round"/></svg>
<div class="a" style="left:825.3px;top:331.5px;width:16.70px;height:17.00px;background:#fff;border:1px solid #eceff4;border-radius:2.5px;box-sizing:border-box;box-shadow:0 0.5px 1px rgba(0,0,0,0.05);"></div>
<svg class="a" style="left:829.65px;top:335.2px;" width="8" height="9.6" viewBox="0 0 8 9.6"><path d="M1 1.2 C1 0.8 1.3 0.6 1.6 0.6 H4.8 L7 2.8 V8.4 C7 8.8 6.7 9 6.4 9 H1.6 C1.3 9 1 8.8 1 8.4 Z" fill="none" stroke="#2c5cbc" stroke-width="1"/><path d="M4.6 0.6 V3 H7 M2.6 5 H5.4 M2.6 6.8 H5.4" fill="none" stroke="#2c5cbc" stroke-width="0.8"/></svg>
<div class="a" style="left:846.3px;top:331.5px;width:16.70px;height:17.00px;background:#fff;border:1px solid #eceff4;border-radius:2.5px;box-sizing:border-box;box-shadow:0 0.5px 1px rgba(0,0,0,0.05);"></div>
<svg class="a" style="left:850.05px;top:335.6px;" width="9.2" height="9.2" viewBox="0 0 9.2 9.2"><rect x="0.6" y="0.6" width="5.6" height="5.4" rx="1.6" fill="none" stroke="#2c5cbc" stroke-width="1.15"/><rect x="3.0" y="3.0" width="5.6" height="5.6" rx="1.6" fill="#fff" stroke="#2c5cbc" stroke-width="1.15"/></svg>
<svg class="a" style="left:872px;top:337.8px;" width="7.5" height="4.5" viewBox="0 0 7.5 4.5"><path d="M0.7 0.7 L3.75 3.6 L6.8 0.7" fill="none" stroke="#3d4559" stroke-width="1.1"/></svg>
<div class="a" style="left:243.6px;top:106.9px;width:3.20px;height:1.90px;background:#8a90a0;opacity:0.8;"></div>
<div class="a" style="left:207.89999999999998px;top:99.10000000000001px;width:26.6px;height:26.6px;border-radius:50%;background:#fff;box-shadow:0 0.5px 2px rgba(0,0,0,0.18);"></div>
<div class="a" style="left:209.89999999999998px;top:101.10000000000001px;width:22.6px;height:22.6px;border-radius:50%;background:#e54a51;"></div>
<svg class="a" style="left:0;top:0" width="920" height="440"><polygon points="221.0,107.9 223.0,107.9 223.0,117.5 221.1,117.5 221.1,110.4 218.6,111.80000000000001 217.89999999999998,110.10000000000001" fill="#fff"/></svg>
<svg class="a" style="left:0;top:0" width="920" height="440"><polygon points="239.2,110.25 258.2,110.25 258.2,105.8 266.6,112.3 258.2,118.8 258.2,114.35 239.2,114.35" fill="#fff" stroke="#fff" stroke-width="3.6" stroke-linejoin="round" style="filter:drop-shadow(0 0.5px 1px rgba(0,0,0,0.15))"/><polygon points="239.2,110.25 258.2,110.25 258.2,105.8 266.6,112.3 258.2,118.8 258.2,114.35 239.2,114.35" fill="#e54a51"/></svg>
<div class="a" style="left:779.3000000000001px;top:145.79999999999998px;width:26.6px;height:26.6px;border-radius:50%;background:#fff;box-shadow:0 0.5px 2px rgba(0,0,0,0.18);"></div>
<div class="a" style="left:781.3000000000001px;top:147.79999999999998px;width:22.6px;height:22.6px;border-radius:50%;background:#e54a51;"></div>
<div class="a t" style="left:781.3000000000001px;top:148.29999999999998px;width:22.6px;height:22.6px;color:#fff;font-weight:700;font-size:14px;line-height:22.6px;text-align:center;-webkit-text-stroke:0.2px #fff;">2</div>
<svg class="a" style="left:0;top:0" width="920" height="440"><polygon points="810.3,157.25 829.3,157.25 829.3,152.8 839.2,159.3 829.3,165.8 829.3,161.35000000000002 810.3,161.35000000000002" fill="#fff" stroke="#fff" stroke-width="3.6" stroke-linejoin="round" style="filter:drop-shadow(0 0.5px 1px rgba(0,0,0,0.15))"/><polygon points="810.3,157.25 829.3,157.25 829.3,152.8 839.2,159.3 829.3,165.8 829.3,161.35000000000002 810.3,161.35000000000002" fill="#e54a51"/></svg>
</div>
</body></html>
